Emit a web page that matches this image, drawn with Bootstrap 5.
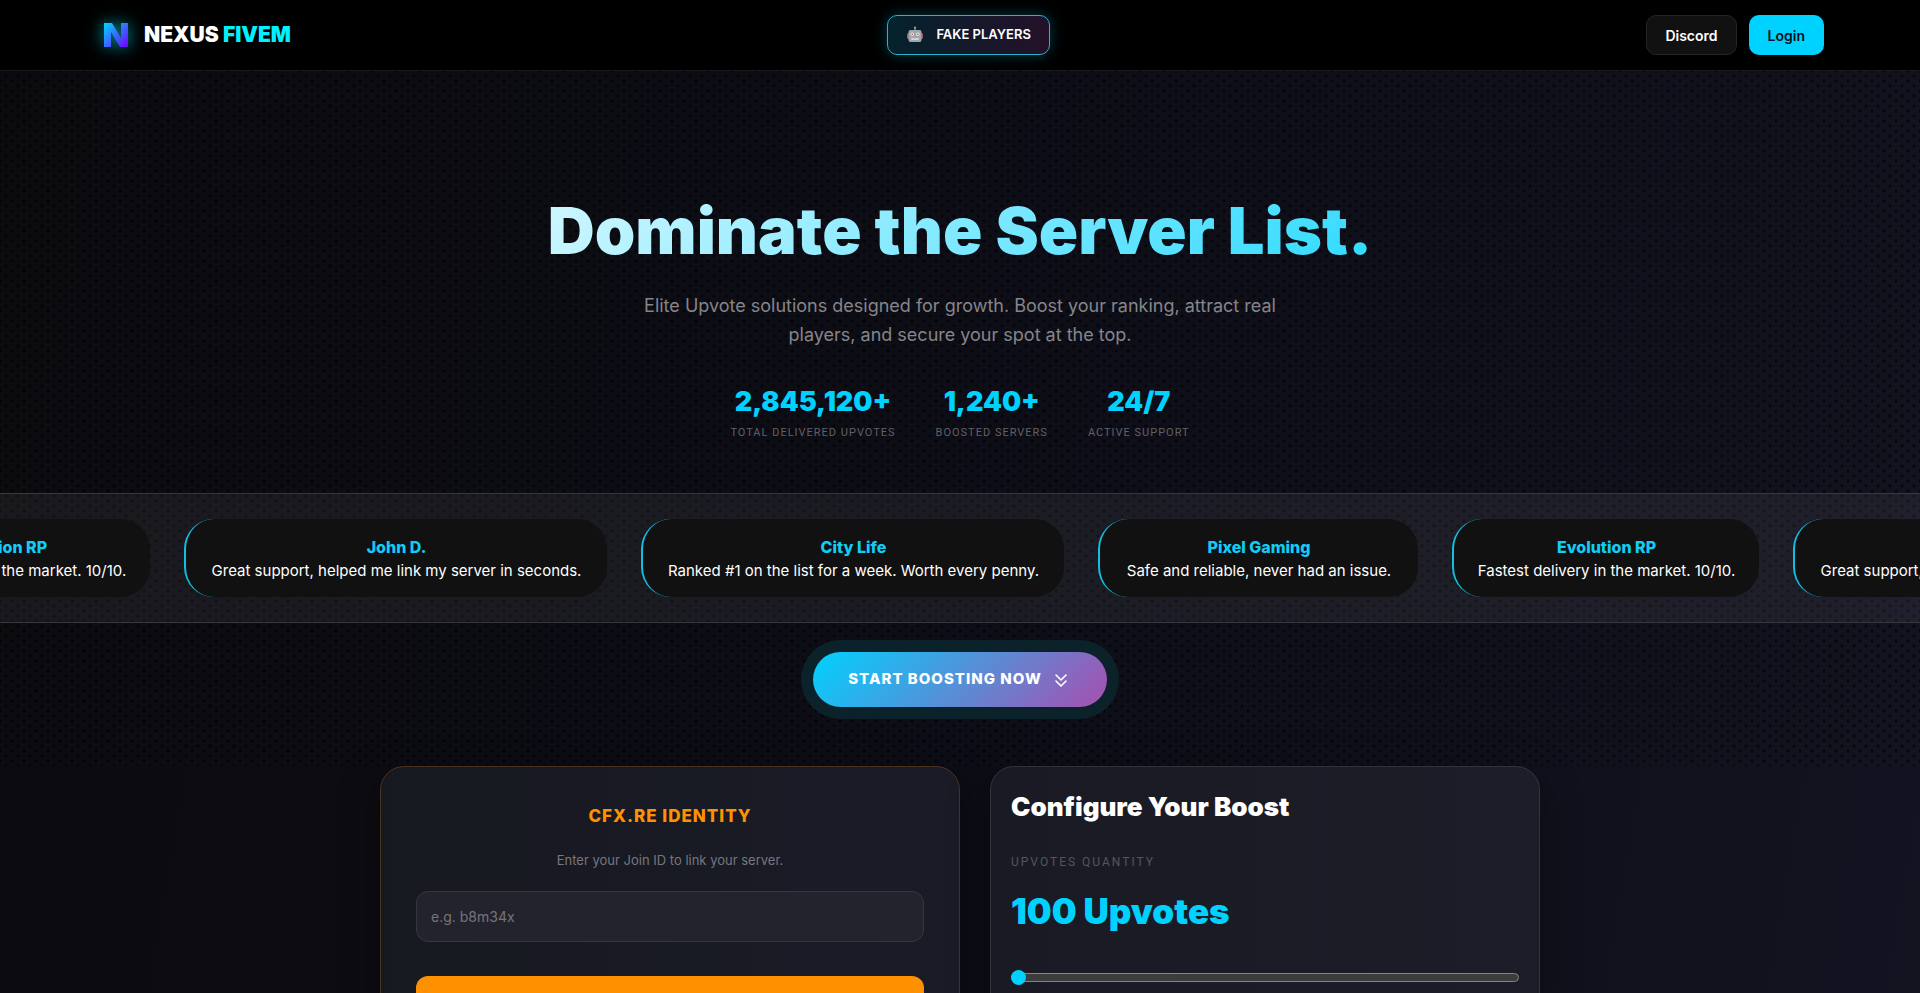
<!DOCTYPE html>
<html lang="en">
<head>
<meta charset="utf-8">
<meta name="viewport" content="width=device-width, initial-scale=1">
<title>Nexus FiveM</title>
<link href="https://cdn.jsdelivr.net/npm/bootstrap@5.3.0/dist/css/bootstrap.min.css" rel="stylesheet">
<style>
:root{--cyan:#00d2ff;--orange:#ff9100}
body{font-family:Inter,sans-serif;color:#fff;background:linear-gradient(100deg,#0b0b0f 0%,#0d0d16 45%,#131321 100%) no-repeat;min-height:100vh;overflow-x:hidden}
.site-nav{background:#000;border-bottom:1px solid #1a1a1b;padding:15px 96px}
.logo-mark{filter:drop-shadow(0 0 8px rgba(0,200,216,.8))}
.brand-text{font-size:21px;line-height:40px;font-weight:900}
.brand-text span{color:#00f2fe}
.pill{height:40px;border-radius:10px;font-size:14px;font-weight:600;padding:0 18px;border:1px solid transparent}
.pill-fake{font-size:13px;color:#fff;background:linear-gradient(90deg,#04222d,#241029);border-color:#27b4cf;box-shadow:0 0 14px rgba(0,210,255,.28)}
.pill-dark{color:#fff;background:#111;border-color:#252525}
.pill-cyan{color:#061018;background:var(--cyan)}
.hero{padding:112px 0 59px;background-image:radial-gradient(circle,rgba(0,0,0,.6) 1px,transparent 2px),radial-gradient(circle,rgba(0,0,0,.6) 1px,transparent 2px);background-size:12px 10px;background-position:0 0,6px 5px}
.hero h1{font-size:65px;font-weight:900;line-height:96px;background:linear-gradient(135deg,#fff,var(--cyan));-webkit-background-clip:text;background-clip:text;color:transparent}
.headline{width:1344px;max-width:100%}
.intro{font-size:18px;line-height:29px;color:#85858a;max-width:700px;margin-top:12px;margin-bottom:32px}
.stats{gap:40px;margin-bottom:50px}
.stat-num{font-size:27px;line-height:42px;font-weight:900;color:var(--cyan)}
.stat-label{font-family:Roboto,sans-serif;font-size:11px;line-height:20px;letter-spacing:1px;color:#606066;text-transform:uppercase}
.ticker{background:rgba(255,255,255,.06);border-top:1px solid #36363c;border-bottom:1px solid #36363c;padding:25px 0;overflow:hidden}
.ticker-track{gap:34px;margin-left:-157px}
.quote{background:#111;border-left:2px solid #12bfe0;border-radius:30px;padding:16px 0 15px;font-size:15px;line-height:23px;flex:none;width:423px}
.quote strong{display:block;font-size:16px;line-height:24px;font-weight:800;color:#12ccf5}
.quote-md{width:320px}
.quote-sm{width:307px}
.cta{height:55px;margin-top:29px;padding:0 35px;border-radius:50px;border:0;color:#fff;font-size:15px;font-weight:800;letter-spacing:1px;background:linear-gradient(135deg,var(--cyan),#9b59b6 92%);box-shadow:0 0 0 12px #0b222b}
.panels{display:grid;grid-template-columns:580fr 550fr;width:1160px;max-width:100%;gap:30px}
.panel{border-radius:24px;border:1px solid #33333e;background:linear-gradient(90deg,#1a1a24,#1d1d29);box-shadow:0 10px 40px rgba(0,0,0,.4);min-width:0}
.panel-id{padding:35px;border-color:#4a321e;background:linear-gradient(90deg,#171920,#1a1b27)}
.panel-boost{padding:20px}
.panel-id h2{font-size:17px;line-height:28px;font-weight:800;letter-spacing:1px;color:var(--orange);margin-bottom:20px}
.hint{font-size:13px;line-height:20px;color:#77777d;margin-bottom:21px}
.join-input,.join-input:focus{height:51px;border-radius:12px;border:1px solid #363640;background:#23232d;color:#fff;font-size:14px;padding:0 14px}
.join-input::placeholder{color:#75757b}
.btn-link-server{margin-top:34px;height:50px;border:0;border-radius:12px;background:var(--orange);color:#000;font-size:15px;font-weight:700}
.panel-boost h2{font-size:26px;line-height:40px;font-weight:900;margin-bottom:25px}
.qty-label{font-family:Roboto,sans-serif;font-size:12px;line-height:20px;letter-spacing:2px;color:#55555d;display:block;margin-bottom:12px}
.qty{font-size:35px;line-height:54px;font-weight:900;color:var(--cyan)}
.slider{appearance:none;-webkit-appearance:none;display:block;width:100%;height:9px;margin:35px 0 40px;border-radius:5px;background:#3b3c3b;border:1px solid #858585}
.slider::-webkit-slider-thumb{-webkit-appearance:none;width:15px;height:15px;margin-left:-1px;border-radius:50%;background:var(--cyan);border:0}
</style>
</head>
<body>
<nav class="site-nav d-flex align-items-center justify-content-between">
  <a href="#" class="d-flex align-items-center text-white text-decoration-none">
    <svg class="logo-mark me-2" width="40" height="40" viewBox="0 0 40 40" aria-hidden="true">
      <defs><linearGradient id="lg" x1="0" y1="0" x2="1" y2="1"><stop offset="0" stop-color="#00d8ff"/><stop offset="1" stop-color="#7000ff"/></linearGradient></defs>
      <path fill="url(#lg)" d="M8 8h8l9 15V8h7v24h-8l-9-15v15H8z"/>
    </svg>
    <span class="brand-text">NEXUS <span>FIVEM</span></span>
  </a>
  <button type="button" class="pill pill-fake d-flex align-items-center">
    <svg class="me-2" width="18" height="18" viewBox="0 0 18 18" aria-hidden="true">
      <path d="M9 1v4" stroke="#8a9499" stroke-width="1.3"/><circle cx="9" cy="1.7" r="1.2" fill="#8a9499"/>
      <rect x="1" y="7" width="16" height="6" rx="1.5" fill="#b8535c"/>
      <rect x="2.5" y="4" width="13" height="12" rx="2" fill="#9da8ac"/>
      <circle cx="6.2" cy="8.3" r="1.7" fill="#e7ecee"/><circle cx="11.8" cy="8.3" r="1.7" fill="#e7ecee"/>
      <circle cx="6.2" cy="8.3" r=".8" fill="#bc3941"/><circle cx="11.8" cy="8.3" r=".8" fill="#bc3941"/>
      <path d="M5.5 13h7" stroke="#e4e7e8" stroke-width="1.8" stroke-dasharray="1.3 .6"/>
    </svg><span class="ms-1">FAKE PLAYERS</span></button>
  <div class="d-flex gap-2">
    <button type="button" class="pill pill-dark me-1">Discord</button>
    <button type="button" class="pill pill-cyan">Login</button>
  </div>
</nav>

<header class="hero text-center">
  <h1 class="headline mx-auto mb-0">Dominate the Server List.</h1>
  <p class="intro mx-auto">Elite Upvote solutions designed for growth. Boost your ranking, attract real players, and secure your spot at the top.</p>
  <div class="stats d-flex justify-content-center">
    <div><div class="stat-num">2,845,120+</div><div class="stat-label">Total Delivered Upvotes</div></div>
    <div><div class="stat-num">1,240+</div><div class="stat-label">Boosted Servers</div></div>
    <div><div class="stat-num">24/7</div><div class="stat-label">Active Support</div></div>
  </div>
  <section class="ticker">
    <div class="ticker-track d-flex">
      <div class="quote quote-sm"><strong>Evolution RP</strong>Fastest delivery in the market. 10/10.</div>
      <div class="quote"><strong>John D.</strong>Great support, helped me link my server in seconds.</div>
      <div class="quote"><strong>City Life</strong>Ranked #1 on the list for a week. Worth every penny.</div>
      <div class="quote quote-md"><strong>Pixel Gaming</strong>Safe and reliable, never had an issue.</div>
      <div class="quote quote-sm"><strong>Evolution RP</strong>Fastest delivery in the market. 10/10.</div>
      <div class="quote"><strong>John D.</strong>Great support, helped me link my server in seconds.</div>
    </div>
  </section>
  <button type="button" class="cta d-inline-flex align-items-center">START BOOSTING NOW
    <svg class="ms-2" width="22" height="22" viewBox="0 0 22 22" fill="none" stroke="#fff" stroke-width="1.6" stroke-linecap="round" stroke-linejoin="round" aria-hidden="true"><path d="M6 6l5 5 5-5M6 12l5 5 5-5"/></svg>
  </button>
</header>

<main class="panels mx-auto">
  <section class="panel panel-id text-center">
    <h2>CFX.RE IDENTITY</h2>
    <label class="hint d-block" for="joinId">Enter your Join ID to link your server.</label>
    <input id="joinId" class="form-control join-input" type="text" placeholder="e.g. b8m34x">
    <button type="button" class="btn-link-server w-100" aria-label="Link server"></button>
  </section>
  <section class="panel panel-boost">
    <h2>Configure Your Boost</h2>
    <label class="qty-label" for="qty">UPVOTES QUANTITY</label>
    <div class="qty">100 Upvotes</div>
    <input id="qty" class="slider" type="range" min="100" max="10000" value="100">
  </section>
</main>
<script src="https://cdn.jsdelivr.net/npm/bootstrap@5.3.0/dist/js/bootstrap.bundle.min.js"></script>
</body>
</html>
